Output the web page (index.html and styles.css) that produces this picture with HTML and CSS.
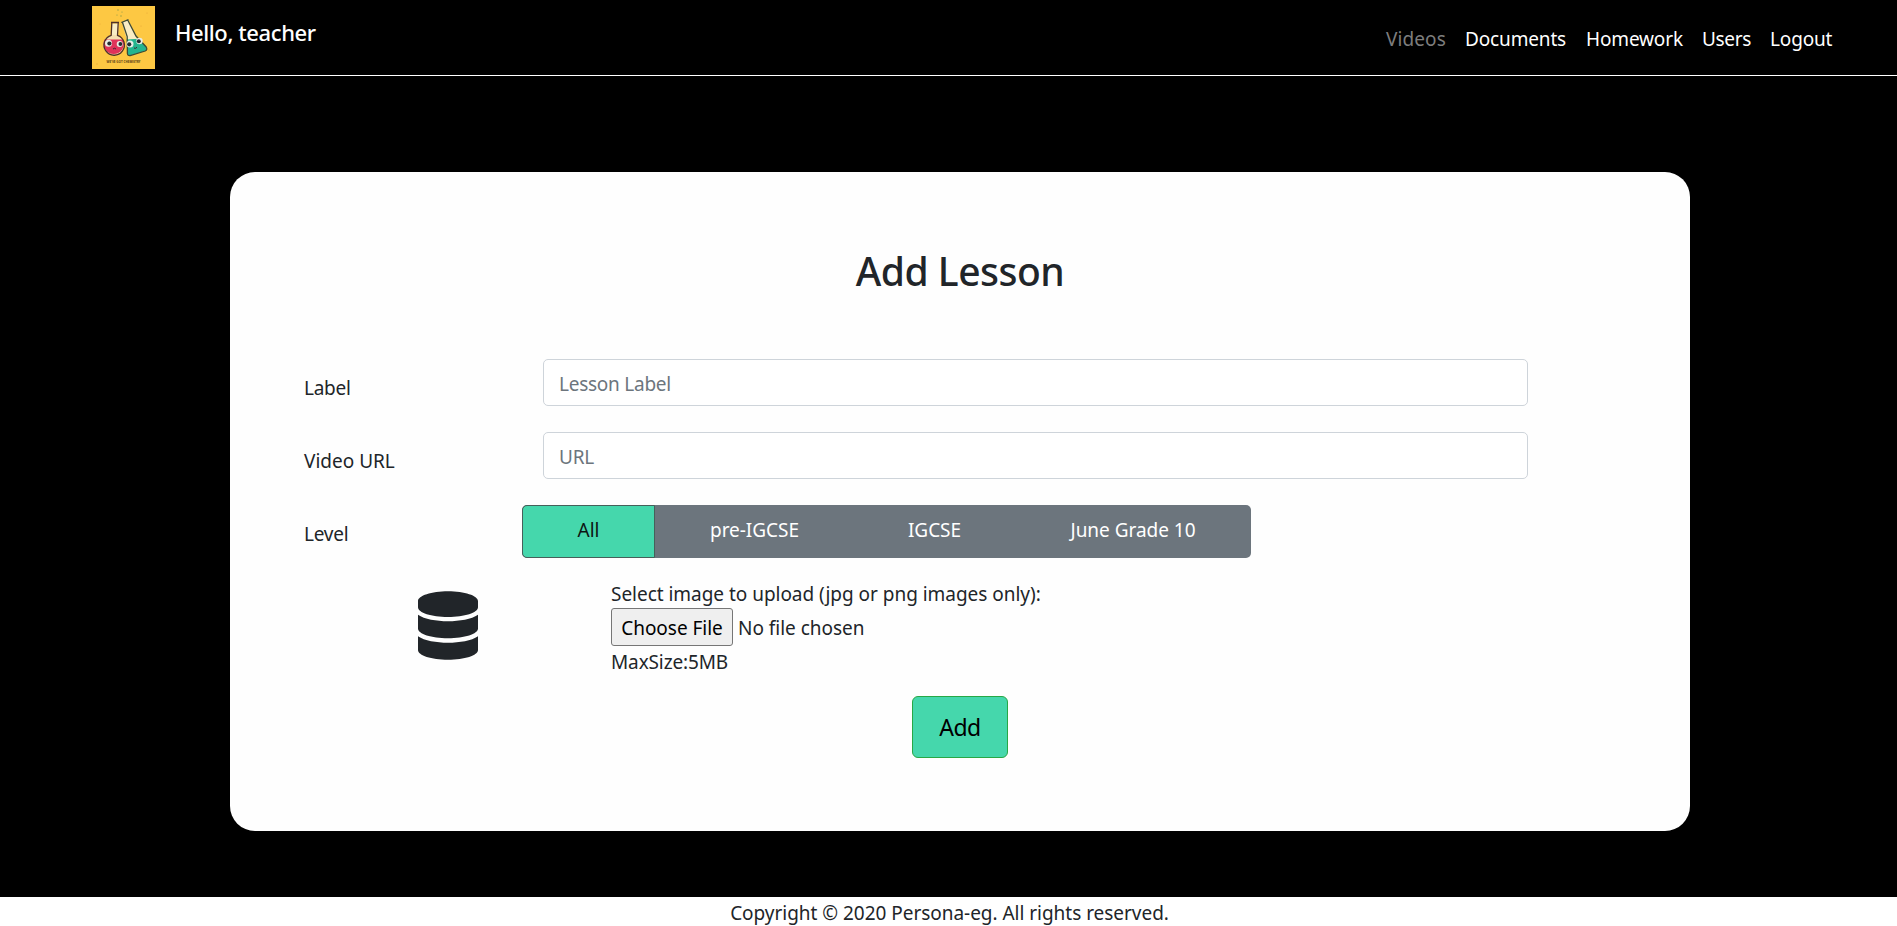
FILE: index.html
```html
<!DOCTYPE html>
<html lang="en">
<head>
<meta charset="utf-8">
<title>Add Lesson</title>
<link rel="stylesheet" href="styles.css">
</head>
<body>
<header class="navbar">
  <svg class="logo" viewBox="0 0 63 63">
    <rect width="63" height="63" fill="#fdc843"/>
    <g fill="#8c9a4a"><circle cx="26" cy="4" r=".7"/><circle cx="30" cy="6" r=".6"/><circle cx="25" cy="9" r=".6"/><circle cx="29" cy="10" r=".7"/></g>
    <g fill="#e8a83a"><circle cx="55" cy="7" r=".6"/><circle cx="8" cy="18" r=".5"/><circle cx="49" cy="20" r=".6"/><circle cx="57" cy="44" r=".6"/><circle cx="5" cy="58" r=".7"/></g>
    <path d="M19.500 17.500h7l-.5 12.500h-6z" fill="#f9edc6"/>
    <circle cx="21.500" cy="39" r="10.200" fill="#f6dfb0"/>
    <path d="M12.500 33.500h18.500a10.200 10.200 0 1 1-18.500 0z" fill="#e0345a"/>
    <path d="M19 16.500h8M19.800 17l-.6 12.300a10.200 10.200 0 1 0 6.300.1l.7-12.400" fill="none" stroke="#4f3028" stroke-width="1.300"/>
    <path d="M30 16l6-2.200 9.500 19.500-10.500 1z" fill="#f9edc6"/>
    <path d="M34.800 33.500l12.200-.8 7.300 8.300q1.500 2.500-1.300 4L38 49.500q-2.500.3-2.800-2.200z" fill="#25b48f"/>
    <path d="M29.300 16.500l7.200-2.900M30.500 16.500l4.700 14 .2 17q.2 2.500 2.800 2l15-4.500q2.600-1.300 1-4L44 30 35.700 14" fill="none" stroke="#3e4a35" stroke-width="1.300"/>
    <g fill="#e8eee6"><circle cx="16.500" cy="37.300" r="3.500"/><circle cx="27.700" cy="38" r="3"/><circle cx="38" cy="38" r="3.500"/><circle cx="47.500" cy="35" r="3.200"/></g>
    <g fill="#252b32"><circle cx="17.400" cy="37.500" r="2.100"/><circle cx="28.400" cy="38" r="1.900"/><circle cx="37.200" cy="38.300" r="2.100"/><circle cx="46.800" cy="35.300" r="2"/></g>
    <path d="M21 43q1.500-1.500 3 0M42 42q1.500 1 3-.7" fill="none" stroke="#3c2430"/>
    <text class="logo-text" x="31.500" y="57.300" text-anchor="middle" textLength="34" lengthAdjust="spacingAndGlyphs">WE'VE GOT CHEMISTRY</text>
  </svg>
  <span class="greeting">Hello, teacher</span>
  <nav class="links">
    <a class="link link-active">Videos</a>
    <a class="link link-documents">Documents</a>
    <a class="link link-homework">Homework</a>
    <a class="link link-users">Users</a>
    <a class="link">Logout</a>
  </nav>
</header>
<main class="page">
  <form class="card">
    <h1 class="title">Add Lesson</h1>
    <div class="row">
      <label class="label" for="lesson">Label</label>
      <input class="field" id="lesson" type="text" placeholder="Lesson Label">
    </div>
    <div class="row">
      <label class="label label-video" for="url">Video URL</label>
      <input class="field field-url" id="url" type="text" placeholder="URL">
    </div>
    <div class="row row-level">
      <span class="label">Level</span>
      <div class="levels">
        <span class="level level-all">All</span>
        <span class="level level-pre">pre-IGCSE</span>
        <span class="level level-igcse">IGCSE</span>
        <span class="level level-june">June Grade 10</span>
      </div>
    </div>
    <div class="upload">
      <svg class="database" viewBox="0 0 448 512"><path fill="#212529" d="M448 73.143v45.714C448 159.143 347.667 192 224 192S0 159.143 0 118.857V73.143C0 32.857 100.333 0 224 0s224 32.857 224 73.143zM448 176v102.857C448 319.143 347.667 352 224 352S0 319.143 0 278.857V176c48.125 33.143 136.208 48.572 224 48.572S399.874 209.143 448 176zm0 160v102.857C448 479.143 347.667 512 224 512S0 479.143 0 438.857V336c48.125 33.143 136.208 48.572 224 48.572S399.874 369.143 448 336z"/></svg>
      <div class="upload-body">
        <div class="upload-line">Select image to upload (jpg or png images only):</div>
        <div class="file"><button class="choose" type="button">Choose File</button><span class="file-name">No file chosen</span></div>
        <div class="upload-line max-size">MaxSize:5MB</div>
      </div>
    </div>
    <button class="add" type="button">Add</button>
  </form>
</main>
<footer class="footer">Copyright © 2020 Persona-eg. All rights reserved.</footer>
</body>
</html>
```

FILE: styles.css
```css
* { box-sizing: border-box; }
body {
  margin: 0;
  height: 926px;
  overflow: hidden;
  display: flex;
  flex-direction: column;
  background: #000;
  color: #212529;
  font: 400 19px/30px "Noto Sans", "Open Sans", sans-serif;
  letter-spacing: -0.03px;
  white-space: nowrap;
}
button, input { font: inherit; color: inherit; margin: 0; letter-spacing: inherit; }
.navbar {
  flex: none;
  height: 76px;
  padding: 6px 62px 0 92px;
  display: flex;
  align-items: flex-start;
  border-bottom: 1px solid #fff;
  color: #fff;
}
.logo { width: 63px; height: 63px; }
.logo-text { font: 700 3.5px "Open Sans", sans-serif; letter-spacing: 0; fill: #5a3b16; }
.greeting {
  margin: 11px 0 0 20px;
  font-size: 22px;
  font-weight: 500;
  letter-spacing: -0.4px;
}
.links { margin: 18px 2px 0 auto; display: flex; font-weight: 450; letter-spacing: -0.15px; }
.link { width: 63px; }
.link-active { width: 79px; font-weight: 400; letter-spacing: 0.1px; color: #7d7d7d; }
.link-documents { width: 121px; }
.link-homework { width: 116px; }
.link-users { width: 68px; letter-spacing: -0.35px; }
.page { flex: none; height: 821px; padding: 96px 207px 0 230px; }
.card {
  height: 659px;
  padding: 69px 73px 0;
  border-radius: 25px;
  background: #fefefe;
  display: flex;
  flex-direction: column;
}
.title {
  margin: 0 0 58px;
  text-align: center;
  font-size: 39px;
  line-height: 60px;
  font-weight: 540;
  letter-spacing: -0.5px;
}
.row { display: flex; height: 47px; margin-bottom: 26px; }
.label { width: 240px; padding: 14px 0 0 1px; letter-spacing: -0.25px; }
.label-video { letter-spacing: 0; }
.field {
  width: 985px;
  height: 47px;
  padding: 2px 15px 0;
  border: 1px solid #ced4da;
  border-radius: 5px;
  background: #fff;
  letter-spacing: -0.25px;
}
.field::placeholder { color: #6c757d; opacity: 1; }
.row-level { height: 53px; margin-bottom: 23px; }
.row-level .label { width: 219px; }
.levels {
  width: 729px;
  display: flex;
  border-radius: 5px;
  background: #6c757d;
  color: #fff;
  font-weight: 450;
}
.level { padding-top: 10px; text-align: center; }
.level-all {
  width: 133px;
  padding-top: 9px;
  border: 1px solid #46605a;
  border-radius: 5px 0 0 5px;
  background: #45d7ac;
  color: #0d1512;
  font-weight: 400;
}
.level-pre { width: 199px; }
.level-igcse { width: 161px; }
.level-june { width: 236px; }
.upload { display: flex; height: 101px; padding-left: 115px; }
.database { width: 60px; height: 69px; margin-top: 10px; }
.upload-body { margin-left: 133px; }
.upload-line { height: 27px; line-height: 24px; }
.upload-line:first-child { padding-top: 1px; }
.file { display: flex; align-items: center; height: 38px; gap: 5px; }
.choose {
  width: 122px;
  height: 38px;
  padding: 2px 0 0;
  border: 1px solid #767676;
  border-radius: 3px;
  background: #efefef;
  color: #000;
}
.file-name { padding-top: 2px; }
.max-size { padding-top: 4px; letter-spacing: -0.13px; }
.add {
  align-self: center;
  width: 96px;
  height: 62px;
  margin-top: 14px;
  padding: 0 0 1px;
  border: 1px solid #28a745;
  border-radius: 6px;
  background: #45d7ac;
  color: #000;
  font-size: 23px;
  letter-spacing: -0.5px;
}
.footer {
  flex: none;
  height: 29px;
  padding: 1px 0 0 2px;
  background: #fff;
  text-align: center;
}
```
